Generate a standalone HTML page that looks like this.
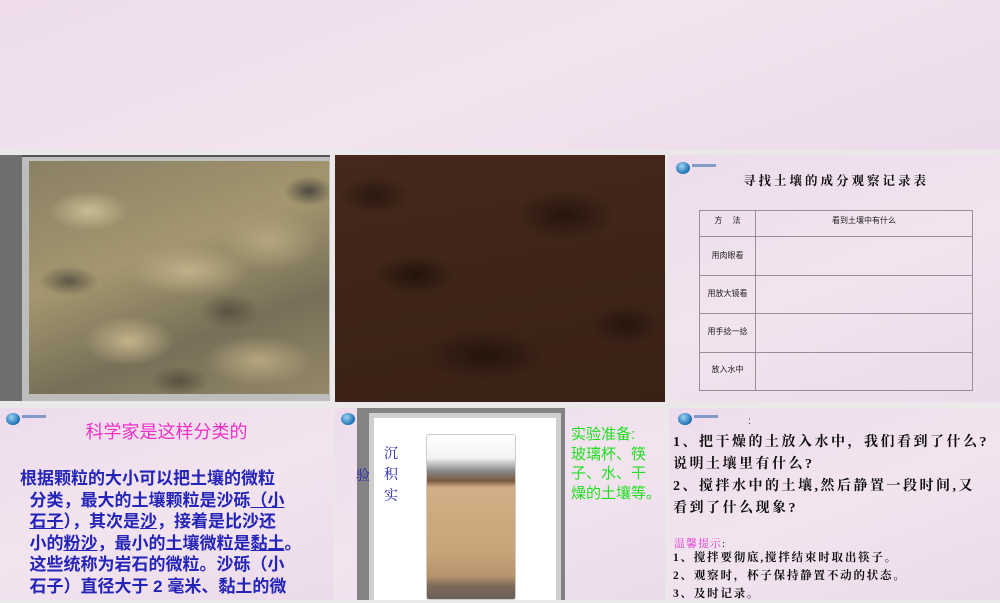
<!DOCTYPE html>
<html><head><meta charset="utf-8"><style>
*{margin:0;padding:0;box-sizing:border-box}
body{width:1000px;height:600px;overflow:hidden;background:#ebe8ea;position:relative;font-family:"Liberation Sans","Noto Sans CJK SC",sans-serif}
.a{position:absolute}
.pink{background:linear-gradient(160deg,#eedcec 0%,#f2e4ef 50%,#ecdbea 100%)}
.logo{position:absolute;width:14px;height:12px;border-radius:50%;background:radial-gradient(circle at 40% 35%,#9fd3f2,#1b6fb3 70%)}
.logo:after{content:"";position:absolute;left:16px;top:2px;width:24px;height:3px;background:#3a6ea8;opacity:.6}
.serif{font-family:"Liberation Serif","Noto Serif CJK SC",serif}
</style></head><body>
<div class="a pink" style="left:0;top:0;width:1000px;height:150px"></div>

<!-- row 1 -->
<div class="a" style="left:0;top:155px;width:22px;height:246px;background:#6e6e6e"></div>
<div class="a" style="left:22px;top:155px;width:308px;height:246px;background:#bdbdbd;border-top:2px solid #555"></div>
<div class="a" style="left:29px;top:161px;width:300px;height:233px;background:
radial-gradient(ellipse 40px 20px at 60px 50px,#c9bd95,transparent),
radial-gradient(ellipse 30px 15px at 40px 120px,#5e5646,transparent),
radial-gradient(ellipse 60px 25px at 160px 110px,#bfb188,transparent),
radial-gradient(ellipse 30px 18px at 200px 150px,#5a5242,transparent),
radial-gradient(ellipse 50px 30px at 240px 80px,#b3a67f,transparent),
radial-gradient(ellipse 25px 15px at 280px 30px,#4e4a40,transparent),
radial-gradient(ellipse 45px 25px at 100px 180px,#c4b48a,transparent),
radial-gradient(ellipse 30px 15px at 150px 220px,#5a5040,transparent),
radial-gradient(ellipse 55px 25px at 230px 200px,#b6a77f,transparent),
linear-gradient(160deg,#8a8064,#a4976f 40%,#776f58 70%,#948868)"></div>
<div class="a" style="left:335px;top:155px;width:330px;height:247px;background:
radial-gradient(ellipse 40px 20px at 80px 120px,#231309,transparent),
radial-gradient(ellipse 50px 25px at 230px 60px,#26150d,transparent),
radial-gradient(ellipse 60px 25px at 150px 200px,#24140b,transparent),
radial-gradient(ellipse 35px 20px at 290px 170px,#26150d,transparent),
radial-gradient(ellipse 35px 20px at 40px 40px,#2a180f,transparent),
linear-gradient(170deg,#46291c,#3e2418 50%,#3a2116)"></div>

<div class="a pink" style="left:669px;top:155px;width:331px;height:247px"></div>
<div class="logo" style="left:676px;top:162px"></div>
<div class="a serif" style="left:669px;top:171px;width:334px;text-align:center;font-size:12.5px;font-weight:bold;letter-spacing:3px;color:#111">寻找土壤的成分观察记录表</div>
<div class="a" style="left:699px;top:210px;width:274px;height:181px;border:1px solid #9a8f99">
 <div class="a" style="left:55px;top:0;width:1px;height:179px;background:#9a8f99"></div>
 <div class="a" style="left:0;top:25px;width:272px;height:1px;background:#9a8f99"></div>
 <div class="a" style="left:0;top:64px;width:272px;height:1px;background:#9a8f99"></div>
 <div class="a" style="left:0;top:102px;width:272px;height:1px;background:#9a8f99"></div>
 <div class="a" style="left:0;top:141px;width:272px;height:1px;background:#9a8f99"></div>
 <div class="a" style="left:0;top:4px;width:55px;text-align:center;font-size:8px;color:#222">方　 法</div>
 <div class="a" style="left:56px;top:4px;width:216px;text-align:center;font-size:8px;color:#222">看到土壤中有什么</div>
 <div class="a" style="left:0;top:39px;width:55px;text-align:center;font-size:8px;color:#222">用肉眼看</div>
 <div class="a" style="left:0;top:77px;width:55px;text-align:center;font-size:8px;color:#222">用放大镜看</div>
 <div class="a" style="left:0;top:115px;width:55px;text-align:center;font-size:8px;color:#222">用手捻一捻</div>
 <div class="a" style="left:0;top:153px;width:55px;text-align:center;font-size:8px;color:#222">放入水中</div>
</div>

<!-- row 2 -->
<div class="a pink" style="left:0;top:408px;width:333px;height:192px"></div>
<div class="logo" style="left:6px;top:413px"></div>
<div class="a" style="left:0;top:418px;width:333px;text-align:center;font-size:18px;color:#ee30c8">科学家是这样分类的</div>
<div class="a" style="left:20px;top:468px;width:310px;font-size:17px;line-height:21.5px;color:#2424b8;font-weight:bold">根据颗粒的大小可以把土壤的微粒<br>
&nbsp;&nbsp;分类，最大的土壤颗粒是沙砾<u>（小</u><br>
&nbsp;&nbsp;<u>石子</u>），其次是<u>沙</u>，接着是比沙还<br>
&nbsp;&nbsp;小的<u>粉沙</u>，最小的土壤微粒是<u>黏土</u>。<br>
&nbsp;&nbsp;这些统称为岩石的微粒。沙砾（小<br>
&nbsp;&nbsp;石子）直径大于 2 毫米、黏土的微</div>

<div class="a pink" style="left:335px;top:408px;width:330px;height:192px"></div>
<div class="logo" style="left:341px;top:413px"></div>
<div class="a" style="left:357px;top:408px;width:208px;height:192px;background:#838383"></div>
<div class="a" style="left:369px;top:413px;width:192px;height:187px;background:#cfcfcf"></div>
<div class="a" style="left:374px;top:418px;width:182px;height:182px;background:#fff"></div>
<div class="a" style="left:426px;top:434px;width:90px;height:166px;border:1px solid #ccc;border-radius:3px;background:linear-gradient(#fff 0,#f2f2f2 14%,#888 22%,#7a5a40 28%,#d2ae86 32%,#caa47a 70%,#b8936c 86%,#7e6a5a 92%,#6c5f55 100%)"></div>
<div class="a serif" style="left:384px;top:444px;font-size:14px;line-height:21px;color:#2020b0;width:20px">沉<br>积<br>实</div>
<div class="a serif" style="left:356px;top:465px;font-size:14px;color:#2020b0">验</div>
<div class="a" style="left:571px;top:425px;font-size:15px;line-height:19.5px;color:#22dd22">实验准备:<br>玻璃杯、筷<br>子、水、干<br>燥的土壤等。</div>

<div class="a pink" style="left:669px;top:408px;width:331px;height:192px"></div>
<div class="logo" style="left:678px;top:413px"></div>
<div class="a" style="left:748px;top:416px;font-size:10px;color:#222">:</div>
<div class="a serif" style="left:673px;top:432px;width:330px;font-size:14px;line-height:22px;font-weight:bold;letter-spacing:2.5px;color:#111">1、把干燥的土放入水中，我们看到了什么?<br>说明土壤里有什么?<br>2、搅拌水中的土壤,然后静置一段时间,又<br>看到了什么现象?</div>
<div class="a serif" style="left:674px;top:535px;font-size:11px;color:#e040d0;letter-spacing:1px">温馨提示<span style="color:#111">:</span></div>
<div class="a serif" style="left:673px;top:549px;font-size:11.5px;line-height:18px;font-weight:bold;letter-spacing:1.8px;color:#111">1、搅拌要彻底,搅拌结束时取出筷子。<br>2、观察时，杯子保持静置不动的状态。<br>3、及时记录。</div>
</body></html>
